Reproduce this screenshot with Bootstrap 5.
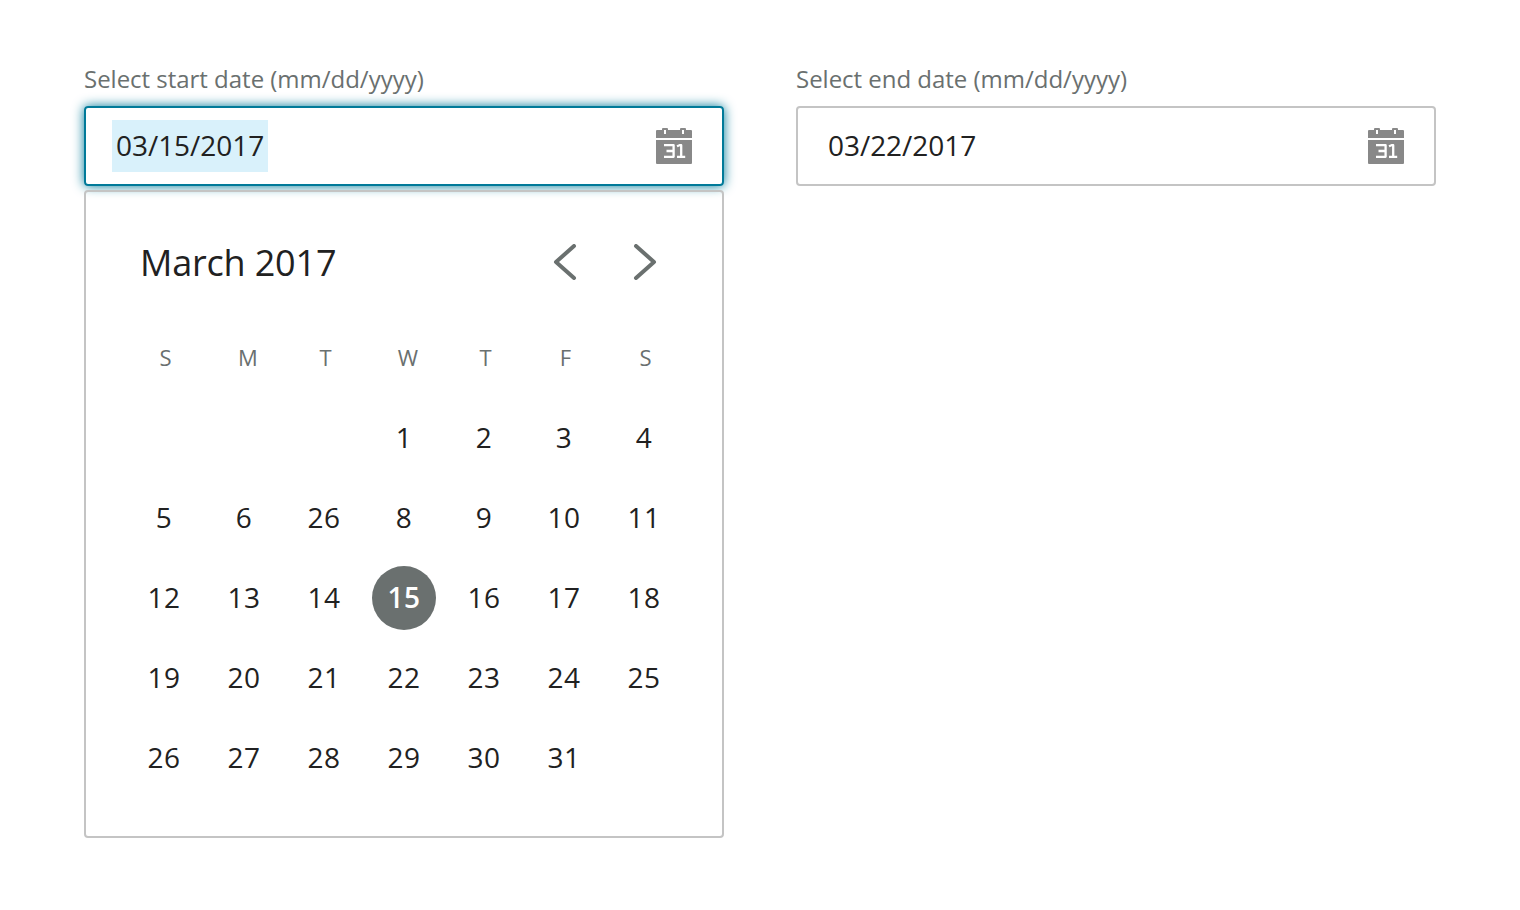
<!DOCTYPE html>
<html lang="en">
<head>
<meta charset="utf-8">
<title>Date range</title>
<link href="https://cdn.jsdelivr.net/npm/bootstrap@5.3.0/dist/css/bootstrap.min.css" rel="stylesheet">
<style>
body { font-family: "Open Sans", "Noto Sans", sans-serif; color: #212121; background: #fff; }
.page { padding: 62px 84px 0; gap: 72px; }
.field { width: 640px; }
.field-label { font-size: 24px; line-height: 33px; letter-spacing: -.02px; color: #6a706f; margin-bottom: 11px; }
.date-box { height: 80px; border: 2px solid #c4c4c4; border-radius: 4px; padding: 0 30px 0 26px; font-size: 28px; }
.date-box.active { border-color: #007a99; box-shadow: 0 0 12px #007a99; }
.date-value { width: 156px; padding: 0 4px; height: 52px; line-height: 51px; letter-spacing: -.05px; }
.active .date-value { background: #d9f1fb; }
.calendar { height: 648px; margin-top: 4px; border: 2px solid #c4c4c4; border-radius: 4px; padding: 45px 38px 0; }
.month { font-size: 36px; line-height: 48px; letter-spacing: -.18px; padding: 2px 0 0 16px; }
.arrows { gap: 56px; padding-right: 27px; }
.days { display: grid; grid-template-columns: repeat(7, 80px); grid-auto-rows: 80px; place-items: center; margin-top: 31px; }
.weekday { font-size: 22px; color: #6a706f; padding: 0 0 2px 3px; }
.wide { padding-left: 8px; }
.day { width: 64px; height: 64px; font-size: 28px; line-height: 63px; letter-spacing: .6px; text-align: center; }
.chosen { background: #6a706f; color: #fff; font-weight: 600; border-radius: 50%; }
.first { grid-column: 4; }
</style>
</head>
<body>
<svg class="d-none"><symbol id="cal" viewBox="0 0 36 36"><path fill="#888" d="M1 2H6V1Q6 0 7 0H11Q12 0 12 1V2H24V1Q24 0 25 0H29Q30 0 30 1V2H35Q36 2 36 3V10H0V3Q0 2 1 2ZM0 12H36V35Q36 36 35 36H1Q0 36 0 35Z"/><path fill="#fff" d="M8 2h2v4H8zM26 2h2v4h-2z"/><path fill="none" stroke="#fff" stroke-width="2.3" stroke-linejoin="round" d="M8 17.2H17.6V28.8H8M10.5 23H17.6M21 18.2L23.5 17.2H25.2V29M21 28.8H29.2"/></symbol></svg>
<main class="page d-flex align-items-start">
  <section class="field">
    <div class="field-label">Select start date (mm/dd/yyyy)</div>
    <div class="date-box active d-flex align-items-center justify-content-between">
      <span class="date-value">03/15/2017</span>
      <svg width="36" height="36"><use href="#cal"/></svg>
    </div>
    <div class="calendar">
      <div class="d-flex align-items-center justify-content-between">
        <div class="month">March 2017</div>
        <div class="arrows d-flex" >
          <svg width="24" height="36" fill="none" stroke="#6a706f" stroke-width="4" stroke-linecap="round" stroke-linejoin="round"><path d="M21 2L3 18L21 34"/></svg>
          <svg width="24" height="36" fill="none" stroke="#6a706f" stroke-width="4" stroke-linecap="round" stroke-linejoin="round"><path d="M3 2L21 18L3 34"/></svg>
        </div>
      </div>
      <div class="days">
        <div class="weekday">S</div><div class="weekday wide">M</div><div class="weekday">T</div><div class="weekday wide">W</div><div class="weekday">T</div><div class="weekday">F</div><div class="weekday">S</div>
        <div class="day first">1</div><div class="day">2</div><div class="day">3</div><div class="day">4</div>
        <div class="day">5</div><div class="day">6</div><div class="day">26</div><div class="day">8</div><div class="day">9</div><div class="day">10</div><div class="day">11</div>
        <div class="day">12</div><div class="day">13</div><div class="day">14</div><div class="day chosen">15</div><div class="day">16</div><div class="day">17</div><div class="day">18</div>
        <div class="day">19</div><div class="day">20</div><div class="day">21</div><div class="day">22</div><div class="day">23</div><div class="day">24</div><div class="day">25</div>
        <div class="day">26</div><div class="day">27</div><div class="day">28</div><div class="day">29</div><div class="day">30</div><div class="day">31</div>
      </div>
    </div>
  </section>
  <section class="field">
    <div class="field-label">Select end date (mm/dd/yyyy)</div>
    <div class="date-box d-flex align-items-center justify-content-between">
      <span class="date-value">03/22/2017</span>
      <svg width="36" height="36"><use href="#cal"/></svg>
    </div>
  </section>
</main>
<script src="https://cdn.jsdelivr.net/npm/bootstrap@5.3.0/dist/js/bootstrap.bundle.min.js"></script>
</body>
</html>
